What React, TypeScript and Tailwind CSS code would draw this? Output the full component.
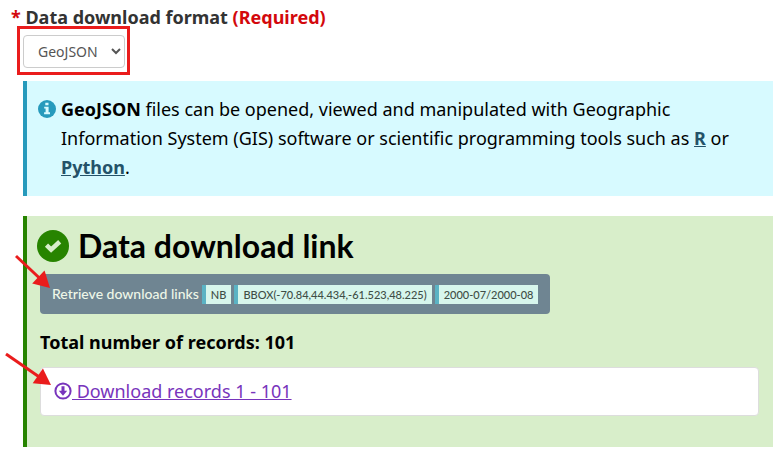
import { useState } from "react";

const FORMATS = ["GeoJSON", "CSV"];
const FILTERS = ["NB", "BBOX(-70.84,44.434,-61.523,48.225)", "2000-07/2000-08"];

function InfoIcon() {
    return (
        <svg viewBox="0 0 18 18" className="size-[18px] shrink-0 mt-[5px]" aria-hidden="true">
            <circle cx="9" cy="9" r="9" fill="#269abc" />
            <path d="M7.3 2.8h3.2v2.5H7.3zM6.2 6.8h4.4v5.4h1.4v2H6.1v-2h1.5V8.6H6.2z" fill="#d7faff" />
        </svg>
    );
}

function CheckIcon() {
    return (
        <svg viewBox="0 0 32 32" className="size-8 shrink-0" aria-hidden="true">
            <circle cx="16" cy="16" r="16" fill="#278400" />
            <path d="M9.5 15.2l4.6 4.4 8.6-7.8" fill="none" stroke="#d8eeca" strokeWidth="4.6" />
        </svg>
    );
}

function DownloadIcon() {
    return (
        <svg viewBox="0 0 18 18" className="inline-block size-[18px] align-[-2px]" aria-hidden="true">
            <circle cx="9" cy="9" r="7.6" fill="none" stroke="currentColor" strokeWidth="2" />
            <path d="M7.5 4.2h3v4.6h2.7L9 13.8 4.8 8.8h2.7z" fill="currentColor" />
        </svg>
    );
}

function Arrow({ className, x, y }: { className: string; x: number; y: number }) {
    // shaft runs from the top left corner to the tip at (x, y)
    const angle = (Math.atan2(y, x) * 180) / Math.PI;
    const length = Math.hypot(x, y);
    return (
        <svg width="50" height="40" className={`absolute overflow-visible pointer-events-none ${className}`} aria-hidden="true">
            <g transform={`rotate(${angle})`} fill="#ea1c1c">
                <rect x="0" y="-1.5" width={length - 12} height="3" />
                <path d={`M${length} 0l-16-9v18z`} />
            </g>
        </svg>
    );
}

export default function App() {
    const [format, setFormat] = useState("GeoJSON");

    return (
        <main className="relative bg-white pt-[3px] pl-[23px] pr-[7px] font-['Noto_Sans',sans-serif] text-lg leading-[29px] text-black">
            <label htmlFor="format" className="block -ml-3 leading-7 font-bold text-[#333]">
                <span className="text-[#d3080c]">*</span> Data download format{" "}
                <span className="text-[#d3080c]">(Required)</span>
            </label>
            <div className="relative mt-1 w-fit">
                <select
                    id="format"
                    value={format}
                    onChange={(e) => setFormat(e.target.value)}
                    className="block h-[33px] w-[102px] rounded border border-[#ccc] bg-white pl-[10px] text-sm text-[#555]"
                >
                    {FORMATS.map((f) => (
                        <option key={f}>{f}</option>
                    ))}
                </select>
                <div className="absolute -top-[9px] -bottom-[7px] -left-[6px] -right-[5px] border-3 border-[#ea1c1c] pointer-events-none" />
            </div>

            <section className="mt-[13px] flex gap-[5px] border-l-4 border-[#269abc] bg-[#d7faff] py-[14px] pl-[11px] pr-[30px]">
                <InfoIcon />
                <p>
                    <strong>GeoJSON</strong> files can be opened, viewed and manipulated with Geographic Information
                    System (GIS) software or scientific programming tools such as{" "}
                    <a href="#r" className="font-bold text-[#245269] underline">R</a> or{" "}
                    <a href="#python" className="font-bold text-[#245269] underline">Python</a>.
                </p>
            </section>

            <section className="mt-5 border-l-4 border-[#278400] bg-[#d8eeca] pt-3 pb-[31px] pl-[13px] pr-[14px]">
                <h2 className="-ml-[3px] flex items-center gap-[9px] font-[Lato,sans-serif] text-[32px] leading-9 font-bold">
                    <CheckIcon />
                    Data download link
                </h2>
                <button
                    type="button"
                    className="mt-[10px] flex h-10 items-center gap-[3px] rounded bg-[#6f8592] px-3 font-[Lato,sans-serif] text-sm font-medium text-[#eef7e8]"
                >
                    Retrieve download links
                    {FILTERS.map((filter) => (
                        <span
                            key={filter}
                            className="border-l-4 border-[#5bb3c4] bg-[#d7f6ec] px-[5px] text-[11px] leading-[19px] text-[#3f4e46]"
                        >
                            {filter}
                        </span>
                    ))}
                </button>
                <p className="mt-[14px] font-bold">Total number of records: 101</p>
                <div className="mt-[10px] rounded border border-[#ddd] bg-white px-[13px] pt-[9px] pb-[9px]">
                    <a href="#download" className="text-[#7834bc] underline">
                        <DownloadIcon /> Download records 1 - 101
                    </a>
                </div>
            </section>

            <Arrow className="left-4 top-[256px]" x={34} y={32} />
            <Arrow className="left-[6px] top-[354px]" x={45} y={31} />
        </main>
    );
}
